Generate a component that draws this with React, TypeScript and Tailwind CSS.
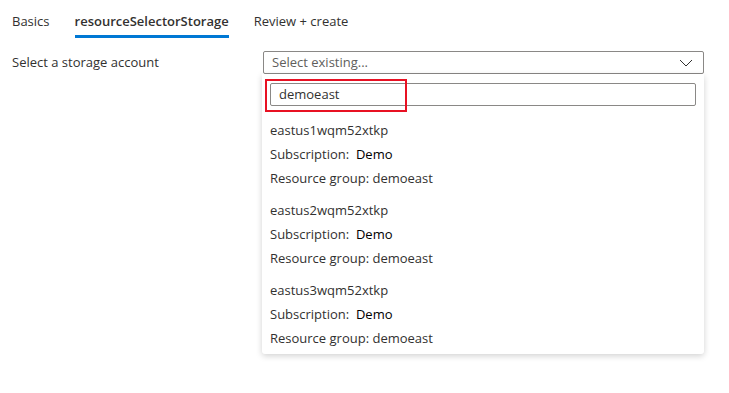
import React from 'react';

const font = { fontFamily: '"Open Sans", "Noto Sans", sans-serif' };

const accounts = [
  { name: 'eastus1wqm52xtkp', sub: 'Demo', rg: 'demoeast' },
  { name: 'eastus2wqm52xtkp', sub: 'Demo', rg: 'demoeast' },
  { name: 'eastus3wqm52xtkp', sub: 'Demo', rg: 'demoeast' },
];

function Chevron() {
  return (
    <svg width="14" height="8" viewBox="0 0 14 8" fill="none" stroke="#323130" strokeWidth="1">
      <path d="M1 1l6 6 6-6" />
    </svg>
  );
}

export default function App() {
  return (
    <div className="w-[729px] h-[393px] bg-white text-[13px] text-[#323130]" style={font}>
      {/* Tabs */}
      <div className="flex items-start gap-[25px] pl-[12px] pt-[10px] h-[38px]">
        <div className="leading-[22px]">Basics</div>
        <div className="flex flex-col">
          <div className="leading-[22px] font-semibold">resourceSelectorStorage</div>
          <div className="mt-[3px] h-[3px] bg-[#0078d4]" />
        </div>
        <div className="leading-[22px]">Review + create</div>
      </div>

      {/* Form row */}
      <div className="flex items-start pt-[13px]">
        <div className="w-[263px] pl-[12px] leading-[22px]">Select a storage account</div>
        <div className="w-[441px] flex flex-col">
          <div className="h-[23px] border border-[#8a8886] rounded-[2px] flex items-center justify-between pl-[8px] pr-[10px]">
            <span className="text-[#605e5c]">Select existing...</span>
            <Chevron />
          </div>

          {/* Dropdown panel */}
          <div className="relative -ml-[1px] w-[442px] h-[280px] bg-white rounded-b-[3px] shadow-[0_2px_6px_rgba(0,0,0,0.18)] pt-[9px] px-[8px]">
            <div className="h-[23px] border border-[#8a8886] rounded-[2px] flex items-center pl-[8px]">
              <span className="text-[#323130]">demoeast</span>
            </div>
            {/* highlight */}
            <div className="absolute left-[3px] top-[5px] w-[142px] h-[33px] border-[2px] border-[#e81123]" />

            <div className="flex flex-col pt-[12px]">
              {accounts.map((a) => (
                <div key={a.name} className="flex flex-col pb-[8px]">
                  <div className="leading-[24px]">{a.name}</div>
                  <div className="leading-[24px]">
                    Subscription:&nbsp;&nbsp;<span className="text-black">{a.sub}</span>
                  </div>
                  <div className="leading-[24px]">Resource group: {a.rg}</div>
                </div>
              ))}
            </div>
          </div>
        </div>
      </div>
    </div>
  );
}
